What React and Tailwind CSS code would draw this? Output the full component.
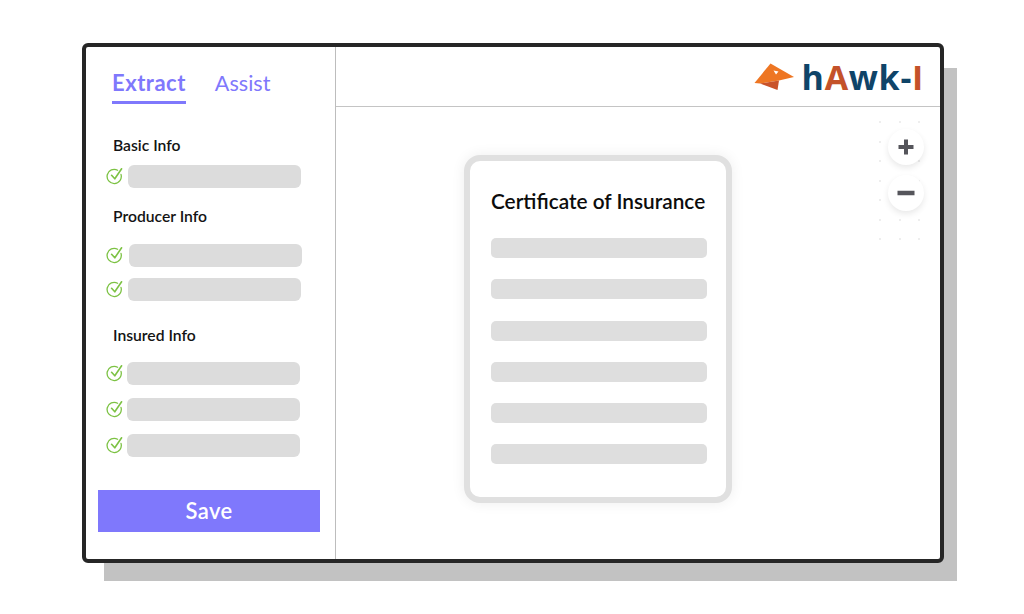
const sans = { fontFamily: '"Lato", "Noto Sans", sans-serif' };

function Check() {
  return (
    <svg width="18" height="18" viewBox="0 1 18 18" fill="none" className="shrink-0">
      <path d="M15 7.4A7.1 7.1 0 1 1 11.6 3.2" stroke="#7cc243" strokeWidth="1.3" strokeLinecap="round" />
      <path d="M5.6 8.3 8.8 11.8 15.6 1.8" stroke="#7cc243" strokeWidth="1.6" strokeLinecap="round" strokeLinejoin="round" />
    </svg>
  );
}

function Row({ className, bar }) {
  return (
    <div className={"flex items-center " + className}>
      <Check />
      <div className={"h-[23px] w-[173px] rounded-[6px] bg-[#dcdcdc] " + bar} />
    </div>
  );
}

function Bird() {
  return (
    <svg width="42" height="30" viewBox="0 0 42 30" className="shrink-0">
      <path d="M0.5 21 16.5 1.5 40 15 25 18.5 6 21.5Z" fill="#ee7623" />
      <path d="M6 21.5 25 18.5 23.5 28Z" fill="#c9532a" />
      <path d="M19.5 8.5 24.5 9.5 22 12.5Z" fill="#fff" />
    </svg>
  );
}

const bars = [
  "mt-[22px]",
  "mt-[21px]",
  "mt-[22px]",
  "mt-[21px]",
  "mt-[21px]",
  "mt-[21px]",
];

const label = "ml-[27px] text-[15.7px] font-semibold leading-[20px] text-[#141414]";

export default function App() {
  return (
    <div className="relative h-[614px] w-[1024px] overflow-hidden bg-white" style={sans}>
      <div className="absolute left-[104px] top-[68px] h-[513px] w-[853px] bg-[#c2c2c2]" />
      <div className="relative ml-[82px] mt-[43px] flex h-[520px] w-[862px] overflow-hidden rounded-[6px] border-4 border-[#262626] bg-white">
        <aside className="flex w-[250px] shrink-0 flex-col border-r border-[#bdbdbd]">
          <div className="ml-[26px] mt-[22px] flex items-start gap-[29px] text-[22px] leading-[28px] text-[#7f78fc]">
            <div className="border-b-[3px] border-[#7f78fc] pb-[4px] font-bold tracking-[0.5px]">Extract</div>
            <div className="text-[21.6px] font-normal">Assist</div>
          </div>
          <div className={label + " mt-[31px]"}>Basic Info</div>
          <Row className="ml-[20px] mt-[10px]" bar="ml-[4px]" />
          <div className={label + " mt-[18px]"}>Producer Info</div>
          <Row className="ml-[20px] mt-[18px]" bar="ml-[5px]" />
          <Row className="ml-[20px] mt-[11px]" bar="ml-[4px]" />
          <div className={label + " mt-[24px]"}>Insured Info</div>
          <Row className="ml-[20px] mt-[17px]" bar="ml-[3px]" />
          <Row className="ml-[20px] mt-[13px]" bar="ml-[3px]" />
          <Row className="ml-[20px] mt-[13px]" bar="ml-[3px]" />
          <div className="ml-[12px] mt-[33px] flex h-[42px] w-[222px] items-center justify-center bg-[#7f78fc] pb-[2px] text-[22px] font-semibold tracking-[0.4px] text-white">
            Save
          </div>
        </aside>
        <main className="relative flex min-w-0 flex-1 flex-col">
          <header className="flex h-[60px] shrink-0 items-center justify-end gap-[6px] border-b border-[#c4c4c4] pr-[16px]">
            <Bird />
            <div className="text-[34px] font-bold leading-none tracking-[0.7px]" style={{ fontFamily: '"Open Sans", sans-serif' }}>
              <span className="text-[#0f4468]">h</span>
              <span className="text-[#c4522a]">A</span>
              <span className="text-[#0f4468]">wk-</span>
              <span className="text-[#c4522a]">I</span>
            </div>
          </header>
          <div className="flex flex-1 items-start pl-[128px] pt-[48px]">
            <div className="h-[348px] w-[268px] rounded-[16px] border-[6px] border-[#e0e0e0] bg-white px-[21px] shadow-[0_0_14px_rgba(0,0,0,0.07)]">
              <div className="mt-[25px] text-[20.8px] font-semibold leading-[30px] whitespace-nowrap text-[#0c0c0c]">Certificate of Insurance</div>
              {bars.map((m, i) => (
                <div key={i} className={"h-[20px] w-[216px] rounded-[5px] bg-[#dedede] " + m} />
              ))}
            </div>
          </div>
          <div className="absolute left-[543px] top-[74px] grid grid-cols-3 gap-x-[17.5px] gap-y-[17.5px]">
            {Array.from({ length: 21 }).map((_, i) => (
              <div key={i} className="h-[2px] w-[2px] rounded-full bg-[#e8e8e8]" />
            ))}
          </div>
          <div className="absolute left-[552px] top-[82px] flex flex-col gap-[10px]">
            <div className="flex h-[36px] w-[36px] items-center justify-center rounded-full bg-white shadow-[0_3px_6px_rgba(0,0,0,0.09)]">
              <svg width="18" height="18" viewBox="0 0 18 18"><path d="M9 1.5v15M1.5 9h15" stroke="#55555b" strokeWidth="4" /></svg>
            </div>
            <div className="flex h-[36px] w-[36px] items-center justify-center rounded-full bg-white shadow-[0_3px_6px_rgba(0,0,0,0.09)]">
              <svg width="18" height="18" viewBox="0 0 18 18"><path d="M0.5 9h17" stroke="#55555b" strokeWidth="4.5" /></svg>
            </div>
          </div>
        </main>
      </div>
    </div>
  );
}
